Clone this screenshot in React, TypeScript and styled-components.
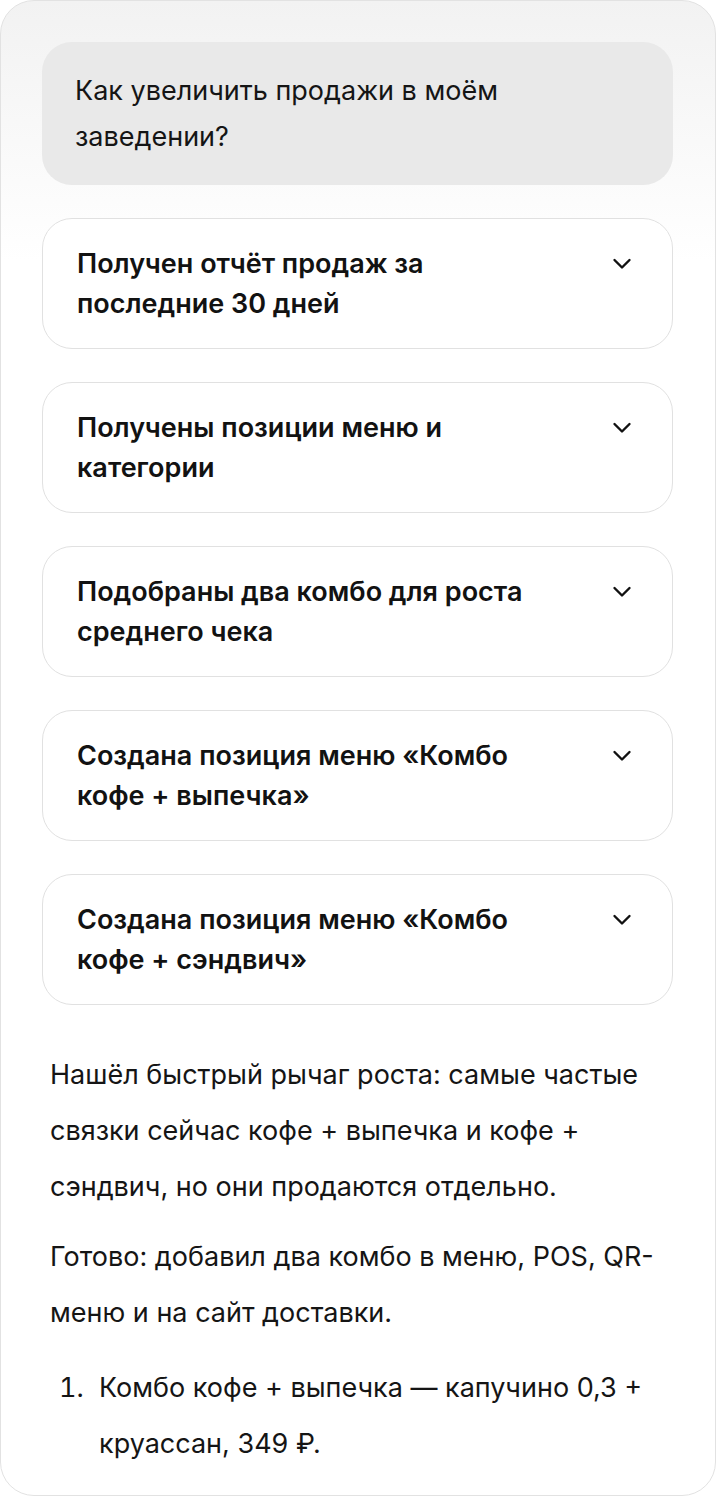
import styled, { createGlobalStyle } from "styled-components";

const GlobalStyle = createGlobalStyle`
  html, body {
    margin: 0;
    padding: 0;
    background: #ffffff;
  }
  body {
    font-family: Inter, "Noto Sans", "Liberation Sans", sans-serif;
    color: #111111;
    -webkit-font-smoothing: antialiased;
  }
`;

const ChatPanel = styled.div`
  box-sizing: border-box;
  width: 716px;
  height: 1496px;
  overflow: hidden;
  border: 1px solid #e2e2e2;
  border-radius: 34px;
  background: linear-gradient(180deg, #f2f2f2 0px, #ffffff 260px);
  padding: 41px 42px 0 41px;
  display: flex;
  flex-direction: column;
  gap: 33px;
`;

const UserBubble = styled.div`
  background: #e9e9e9;
  border-radius: 30px;
  padding: 26px 33px 25px 33px;
  font-size: 27px;
  line-height: 46px;
  font-weight: 400;
  color: #151515;
`;

const BubbleText = styled.div`
  max-width: 540px;
`;

const StepCard = styled.div`
  box-sizing: border-box;
  height: 131px;
  background: #ffffff;
  border: 1.5px solid #e1e1e1;
  border-radius: 30px;
  padding: 25px 34px 0 34px;
  display: flex;
  align-items: flex-start;
  justify-content: space-between;
`;

const StepTitle = styled.div`
  max-width: 500px;
  font-size: 27px;
  line-height: 40px;
  font-weight: 600;
  color: #121212;
`;

const Chevron = styled.svg`
  flex: none;
  margin-top: 14px;
  margin-right: 6px;
`;

const Answer = styled.div`
  padding: 9px 8px 0 8px;
  display: flex;
  flex-direction: column;
  gap: 14px;
  font-size: 27px;
  line-height: 56px;
  color: #151515;
`;

const Paragraph = styled.p`
  margin: 0;
`;

const List = styled.ol`
  margin: 5px 0 0 0;
  padding-left: 41px;
`;

const ListItem = styled.li`
  padding-left: 8px;
`;

const steps = [
  "Получен отчёт продаж за последние 30 дней",
  "Получены позиции меню и категории",
  "Подобраны два комбо для роста среднего чека",
  "Создана позиция меню «Комбо кофе + выпечка»",
  "Создана позиция меню «Комбо кофе + сэндвич»",
];

function ChevronDown() {
  return (
    <Chevron width="20" height="12" viewBox="0 0 20 12" fill="none">
      <polyline
        points="2.5,2 10,9.5 17.5,2"
        stroke="#111"
        strokeWidth="2.4"
        strokeLinecap="round"
        strokeLinejoin="round"
      />
    </Chevron>
  );
}

export default function App() {
  return (
    <>
      <GlobalStyle />
      <ChatPanel>
        <UserBubble>
          <BubbleText>Как увеличить продажи в моём заведении?</BubbleText>
        </UserBubble>
        {steps.map((s) => (
          <StepCard key={s}>
            <StepTitle>{s}</StepTitle>
            <ChevronDown />
          </StepCard>
        ))}
        <Answer>
          <Paragraph>
            Нашёл быстрый рычаг роста: самые частые связки сейчас кофе +
            выпечка и кофе + сэндвич, но они продаются отдельно.
          </Paragraph>
          <Paragraph>
            Готово: добавил два комбо в меню, POS, QR-меню и на сайт доставки.
          </Paragraph>
          <List>
            <ListItem>
              Комбо кофе + выпечка — капучино 0,3 + круассан, 349 ₽.
            </ListItem>
          </List>
        </Answer>
      </ChatPanel>
    </>
  );
}
